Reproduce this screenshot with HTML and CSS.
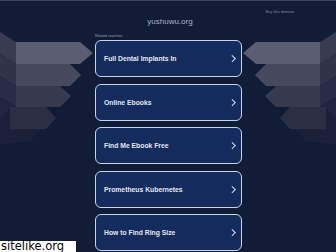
FILE: index.html
```html
<!DOCTYPE html>
<html lang="en">
<head>
  <meta charset="UTF-8">
  <meta name="viewport" content="width=device-width, initial-scale=1.0">
  <title>yushuwu.org</title>
  <link rel="stylesheet" href="styles.css">
</head>
<body>
  <div class="topline"></div>
  <header class="head">
    <a class="buy" href="#">Buy this domain.</a>
  </header>
  <h1 class="domain">yushuwu.org</h1>

  <div class="layout">
    <!-- left decoration -->
    <div class="deco">
      <svg width="95" height="130" viewBox="0 0 95 130">
        <polygon points="0,0 16,10 16,32 0,22" fill="#383c53"/>
        <polygon points="0,22 16,32 16,54 0,44" fill="#30344b"/>
        <polygon points="0,44 16,54 16,75 0,65" fill="#282d45"/>
        <polygon points="0,65 16,75 16,97 0,87" fill="#20263e"/>
        <polygon points="16,10 80,10 93,21 80,32 16,32" fill="#5b5e72"/>
        <polygon points="16,32 70,32 81,43 70,54 16,54" fill="#474a5f"/>
        <polygon points="16,54 60,54 71,64 60,75 16,75" fill="#363a51"/>
        <polygon points="10,75 46,75 56,86 46,97 10,97" fill="#2a2f46"/>
        <polygon points="0,87 10,75 10,97 40,97 30,110 0,112" fill="#192037"/>
      </svg>
    </div>

    <main class="center">
      <p class="label">Related searches</p>
      <ul class="links">
        <li><a href="#">Full Dental Implants In<span class="chev"></span></a></li>
        <li><a href="#">Online Ebooks<span class="chev"></span></a></li>
        <li><a href="#">Find Me Ebook Free<span class="chev"></span></a></li>
        <li><a href="#">Prometheus Kubernetes<span class="chev"></span></a></li>
        <li><a href="#">How to Find Ring Size<span class="chev"></span></a></li>
      </ul>
    </main>

    <!-- right decoration (same drawing, flipped) -->
    <div class="deco flip">
      <svg width="95" height="130" viewBox="0 0 95 130">
        <polygon points="0,0 16,10 16,32 0,22" fill="#383c53"/>
        <polygon points="0,22 16,32 16,54 0,44" fill="#30344b"/>
        <polygon points="0,44 16,54 16,75 0,65" fill="#282d45"/>
        <polygon points="0,65 16,75 16,97 0,87" fill="#20263e"/>
        <polygon points="16,10 80,10 93,21 80,32 16,32" fill="#5b5e72"/>
        <polygon points="16,32 70,32 81,43 70,54 16,54" fill="#474a5f"/>
        <polygon points="16,54 60,54 71,64 60,75 16,75" fill="#363a51"/>
        <polygon points="10,75 46,75 56,86 46,97 10,97" fill="#2a2f46"/>
        <polygon points="0,87 10,75 10,97 40,97 30,110 0,112" fill="#192037"/>
      </svg>
    </div>
  </div>

  <div class="watermark">sitelike.org</div>
</body>
</html>
```

FILE: styles.css
```css
html, body {
  margin: 0;
  height: 100%;
}
body {
  background: #111c37;
  font-family: "Liberation Sans", Arial, sans-serif;
  color: #dfe5f1;
  overflow: hidden;
  position: relative;
}
.topline {
  height: 1px;
  background: #3a4259;
}
.head {
  height: 13px;
  display: flex;
  justify-content: flex-end;
  align-items: flex-end;
  padding-right: 41px;
}
.buy {
  font-size: 4px;
  line-height: 5px;
  color: #7d8599;
  text-decoration: none;
}
.domain {
  margin: 3px 0 0;
  height: 15px;
  text-align: center;
  font-size: 8px;
  line-height: 10px;
  font-weight: normal;
  color: #a9b1c1;
  padding-left: 4px;
}
.layout {
  display: grid;
  grid-template-columns: 95px 147px 94px;
}
.deco svg {
  display: block;
}
.deco.flip svg {
  transform: scaleX(-1);
  margin-left: -1px;
}
.label {
  margin: 2px 0 0;
  font-size: 3.5px;
  line-height: 5px;
  color: #9aa3b5;
}
.links {
  list-style: none;
  margin: 1px 0 0;
  padding: 0;
  display: flex;
  flex-direction: column;
  gap: 6.5px;
}
.links a {
  height: 37px;
  box-sizing: border-box;
  display: flex;
  align-items: center;
  justify-content: space-between;
  padding: 0 7px 0 8px;
  border: 1px solid #c8d3ea;
  border-radius: 6px;
  background: linear-gradient(180deg, #152c5e, #142b5c);
  color: #e1e7f2;
  font-size: 6.8px;
  font-weight: bold;
  text-decoration: none;
}
.chev {
  width: 3.5px;
  height: 3.5px;
  border-top: 1px solid #d8e0ef;
  border-right: 1px solid #d8e0ef;
  transform: rotate(45deg);
}
.watermark {
  position: absolute;
  left: 0;
  bottom: 0;
  width: 76px;
  height: 11px;
  background: #fff;
  color: #000;
  font-family: "DejaVu Sans", sans-serif;
  font-size: 11.5px;
  line-height: 11px;
  padding-left: 1px;
  box-sizing: border-box;
}
```
